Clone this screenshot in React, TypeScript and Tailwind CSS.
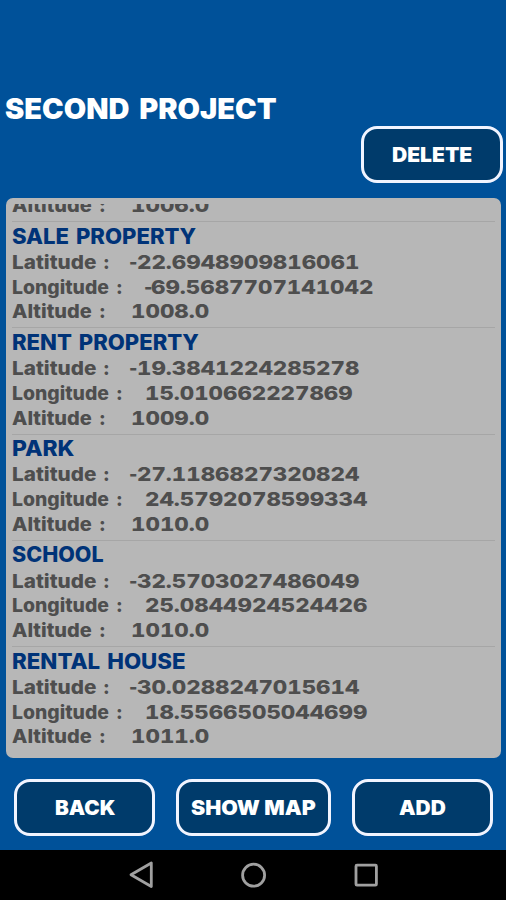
import { useLayoutEffect, useRef, useState } from "react";
import clsx from "clsx";

interface Place {
  name: string;
  nameWidth: number;
  latitude: string;
  longitude: string;
  altitude: string;
}

const places: Place[] = [
  { name: "SALE PROPERTY", nameWidth: 184, latitude: "-22.6948909816061", longitude: "-69.5687707141042", altitude: "1008.0" },
  { name: "RENT PROPERTY", nameWidth: 187, latitude: "-19.3841224285278", longitude: "15.010662227869", altitude: "1009.0" },
  { name: "PARK", nameWidth: 62, latitude: "-27.1186827320824", longitude: "24.5792078599334", altitude: "1010.0" },
  { name: "SCHOOL", nameWidth: 92, latitude: "-32.5703027486049", longitude: "25.0844924524426", altitude: "1010.0" },
  { name: "RENTAL HOUSE", nameWidth: 174, latitude: "-30.0288247015614", longitude: "18.5566505044699", altitude: "1011.0" },
];

// word width and start of the value for each label
const fields = {
  Latitude: { word: 84, offset: "w-[118px]" },
  Longitude: { word: 97, offset: "w-[132.5px]" },
  Altitude: { word: 80, offset: "w-[119px]" },
};

interface StretchProps {
  text: string;
  width: number;
}

// Stretches the text horizontally so that it takes the given width
function Stretch({ text, width }: StretchProps) {
  const ref = useRef<HTMLSpanElement>(null);
  const [scale, setScale] = useState(1);

  useLayoutEffect(() => {
    if (ref.current) setScale(width / ref.current.offsetWidth);
  }, [text, width]);

  return (
    <span className="inline-block shrink-0 text-left" style={{ width }}>
      <span ref={ref} className="inline-block origin-left whitespace-nowrap" style={{ transform: `scaleX(${scale})` }}>
        {text}
      </span>
    </span>
  );
}

function Value({ value }: { value: string }) {
  const negative = value.startsWith("-");
  const number = negative ? value.slice(1) : value;
  return (
    <span className={clsx("flex", negative && "-ml-px")}>
      {negative && (
        <span className="-mr-px">
          <Stretch text="-" width={8.5} />
        </span>
      )}
      <span className="tabular-nums">
        <Stretch text={number} width={(number.length - 1) * 14.45 + 5.5} />
      </span>
    </span>
  );
}

function Field({ label, value }: { label: keyof typeof fields; value: string }) {
  const { word, offset } = fields[label];
  return (
    <div className="flex h-[24.75px] items-center text-[19px] leading-none font-extrabold text-[#4e4e4e]">
      <span className={clsx("flex shrink-0 gap-[7px]", offset)}>
        <Stretch text={label} width={word} />
        <span>:</span>
      </span>
      <Value value={value} />
    </div>
  );
}

function PlaceItem({ place }: { place: Place }) {
  return (
    <li className="h-[106.25px] border-t border-[#a6a6a6]">
      <h2 className="flex h-7 items-center text-[21px] leading-none font-extrabold text-[#003378] [word-spacing:2px]">
        <Stretch text={place.name} width={place.nameWidth} />
      </h2>
      <Field label="Latitude" value={place.latitude} />
      <Field label="Longitude" value={place.longitude} />
      <Field label="Altitude" value={place.altitude} />
    </li>
  );
}

interface ActionButtonProps {
  label: string;
  textWidth: number;
  className?: string;
}

function ActionButton({ label, textWidth, className }: ActionButtonProps) {
  return (
    <button
      type="button"
      className={clsx(
        "flex h-[57px] items-center justify-center rounded-[16px] border-[3px] border-[#f1f4ff] bg-[#003b6b] text-[20px] leading-none font-black text-white",
        className,
      )}>
      <Stretch text={label} width={textWidth} />
    </button>
  );
}

function NavBar() {
  return (
    <nav className="h-[50px] bg-black">
      <svg width="506" height="50" viewBox="0 0 506 50" fill="none" stroke="#a0a0a0" strokeWidth="2.8">
        <path d="M151.3 13v23.5L131 24.8z" strokeLinejoin="round" />
        <circle cx="253.6" cy="25.2" r="11" />
        <rect x="356" y="15.2" width="20.4" height="20" rx="1" />
      </svg>
    </nav>
  );
}

export default function App() {
  return (
    <div className="flex h-[900px] w-[506px] flex-col overflow-hidden bg-[#005199] font-['Inter','Liberation_Sans',sans-serif]">
      <header className="h-[198px] pt-[95px]">
        <h1 className="h-[31px] pl-[5px] text-[28px] leading-[28px] font-black text-white [word-spacing:4px]">
          <Stretch text="SECOND PROJECT" width={272} />
        </h1>
        <div className="flex justify-end pr-[3px]">
          <ActionButton label="DELETE" textWidth={80} className="w-[142px]" />
        </div>
      </header>

      <main className="mr-[5px] ml-[6px] h-[560px] rounded-[7px] bg-[#b7b7b7] px-[6px] py-[6px]">
        <div className="h-full overflow-hidden">
          {/* last line of the item that is scrolled out of view */}
          <div className="-mt-[10.75px] h-[27.75px]">
            <Field label="Altitude" value="1006.0" />
          </div>
          <ul>
            {places.map((place) => (
              <PlaceItem key={place.name} place={place} />
            ))}
          </ul>
        </div>
      </main>

      <footer className="flex h-[92px] gap-[21px] pt-[21px] pl-[14px]">
        <ActionButton label="BACK" textWidth={60} className="w-[141px]" />
        <ActionButton label="SHOW MAP" textWidth={125} className="w-[155px]" />
        <ActionButton label="ADD" textWidth={47} className="w-[141px]" />
      </footer>
      <NavBar />
    </div>
  );
}
